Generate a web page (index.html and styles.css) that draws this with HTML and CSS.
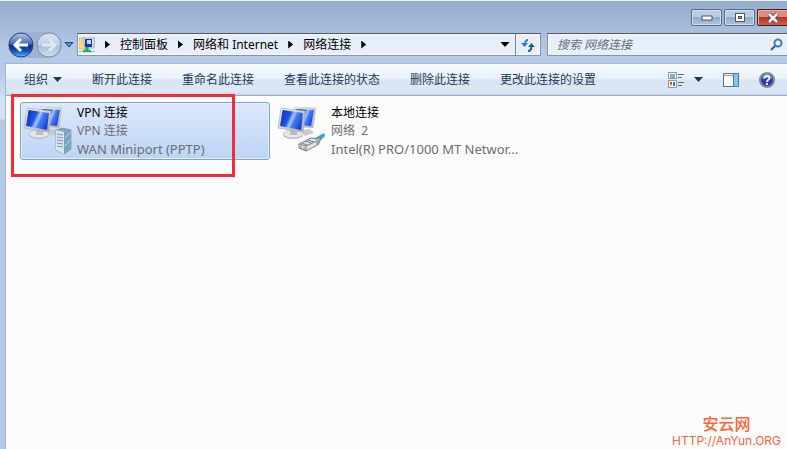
FILE: index.html
```html
<!DOCTYPE html>
<html lang="zh-CN">
<head>
<meta charset="utf-8">
<title>网络连接</title>
<link rel="stylesheet" href="styles.css">
</head>
<body>
<svg class="defs" width="0" height="0" aria-hidden="true">
  <defs>
    <linearGradient id="screen" x1="0" y1=".3" x2="1" y2=".7">
      <stop offset="0" stop-color="#0a36c4"/><stop offset=".35" stop-color="#1f55e0"/>
      <stop offset=".5" stop-color="#a9c8fb"/><stop offset=".62" stop-color="#4a7df0"/><stop offset="1" stop-color="#0b3ad8"/>
    </linearGradient>
    <linearGradient id="metal" x1="0" y1="0" x2="1" y2="1">
      <stop offset="0" stop-color="#f7f7f4"/><stop offset="1" stop-color="#a5aaad"/>
    </linearGradient>
    <linearGradient id="ball" x1="0" y1="0" x2="0" y2="1">
      <stop offset="0" stop-color="#b4c6ea"/><stop offset=".47" stop-color="#3f66b8"/>
      <stop offset=".5" stop-color="#0c2c86"/><stop offset=".75" stop-color="#1250b8"/><stop offset="1" stop-color="#48c8fa"/>
    </linearGradient>
    <linearGradient id="pale" x1="0" y1="0" x2="0" y2="1">
      <stop offset="0" stop-color="#dce6f2"/><stop offset=".48" stop-color="#c0cfe2"/>
      <stop offset=".52" stop-color="#a9bdd6"/><stop offset="1" stop-color="#d0dfef"/>
    </linearGradient>
    <g id="monitors">
      <path d="M16 2 38 3 35 23 24 22Z" fill="url(#metal)" stroke="#bcc4ca" stroke-width=".6"/>
      <path d="M18 4 36 5 33 21 22 20Z" fill="url(#screen)"/>
      <path d="M22 25l10-1 4 4-9 3z" fill="#c6cbce"/>
      <ellipse cx="15" cy="30" rx="10" ry="4" fill="#b8bdc0"/>
      <ellipse cx="15" cy="29" rx="10" ry="4" fill="#e5e7e7" stroke="#a7adb0" stroke-width=".5"/>
      <path d="M12 23l8 1-1 6h-7z" fill="#b9bec1"/>
      <path d="M3 3 27 6 25 27 0 23Z" fill="url(#metal)" stroke="#a7b0b7" stroke-width=".7"/>
      <path d="M4.500 5 25 8 23 25 2 21Z" fill="url(#screen)"/>
    </g>
  </defs>
</svg>
<div class="window">
  <header class="titlebar">
    <button class="caption" aria-label="最小化"><svg width="12" height="6"><rect x="1" y="1" width="10" height="4" fill="#fff" stroke="#4c5361"/></svg></button>
    <button class="caption" aria-label="最大化"><svg width="12" height="10"><rect x="1.500" y=".5" width="9" height="8" fill="#fff" stroke="#4c5361"/><rect x="4.500" y="3.500" width="3" height="2" fill="#8fa5c4" stroke="#4c5361"/></svg></button>
    <button class="caption close" aria-label="关闭"><svg width="14" height="12"><path d="M3 2l8 8M11 2l-8 8" stroke="#5c3a43" stroke-width="4.500"/><path d="M3 2l8 8M11 2l-8 8" stroke="#fff" stroke-width="2.500"/></svg></button>
  </header>
  <nav class="navrow">
    <div class="history">
      <button aria-label="后退"><svg width="26" height="26"><circle cx="13" cy="13" r="12" fill="url(#ball)" stroke="#2a4375"/><path d="M7 13h13M13 7l-6 6 6 6" fill="none" stroke="#fff" stroke-width="3"/></svg></button>
      <button aria-label="前进"><svg width="26" height="26"><circle cx="13" cy="13" r="12" fill="url(#pale)" stroke="#8290a8"/><path d="M6 13h13M13 7l6 6-6 6" fill="none" stroke="#dfe9f4" stroke-width="3"/></svg></button>
    </div>
    <button class="recent" aria-label="最近浏览"><svg width="10" height="6"><path d="M1 .5h8L5 5z" fill="#3aa0dc" stroke="#23406e"/></svg></button>
    <div class="address">
      <svg class="place" width="16" height="16"><path d="M0 1h6l1 2v9H0z" fill="#f5dc78" stroke="#cfb345" stroke-width=".7"/><path d="M4 1h12l-1 10H6z" fill="#d8dde2" stroke="#949ca8" stroke-width=".7"/><path d="M6 2h7v8H6z" fill="#1a36a8"/><path d="M8 3h4v4H8z" fill="#c3dbff"/><path d="M0 14.500h16" stroke="#adb8bb"/><path d="M8 10v3" stroke="#28a764" stroke-width="3"/><path d="M4 14h8" stroke="#28b36c" stroke-width="2.500"/></svg>
      <span class="next"></span><a href="#">控制面板</a>
      <span class="next"></span><a href="#">网络和 Internet</a>
      <span class="next"></span><a href="#">网络连接</a>
      <span class="next"></span>
      <button class="drop" aria-label="以前的位置"><span class="down black"></span></button>
      <button class="refresh" aria-label="刷新"><svg width="14" height="14"><path d="M4 6.500C4 3 5 2 7 2" fill="none" stroke="#2c7fc6" stroke-width="2"/><path d="M0 5h7L3.500 9z" fill="#2c7fc6"/><path d="M10.500 8c0 3.500-1 5-3.500 5" fill="none" stroke="#1e5c9f" stroke-width="2"/><path d="M7 9h7l-3.500-4z" fill="#1e5c9f"/></svg></button>
    </div>
    <label class="search"><input type="text" placeholder="搜索 网络连接" aria-label="搜索 网络连接"><svg width="13" height="13"><path d="M1 12l4.500-4.500" stroke="#31558f" stroke-width="2"/><circle cx="8" cy="5" r="3.500" fill="#e9f3fc" stroke="#3d7cc4" stroke-width="2"/></svg></label>
  </nav>
  <main class="body">
    <div class="toolbar">
      <button class="organize">组织<span class="down"></span></button>
      <button>断开此连接</button>
      <button>重命名此连接</button>
      <button>查看此连接的状态</button>
      <button>删除此连接</button>
      <button>更改此连接的设置</button>
      <div class="tools">
        <button class="view" aria-label="更改视图"><svg width="17" height="16"><rect x=".5" y=".5" width="8" height="6" fill="#fff" stroke="#8b99ae"/><path d="M2 3h5" stroke="#73b9dc" stroke-width="2"/><path d="M2 5h5" stroke="#25634c"/><rect x=".5" y="8.500" width="8" height="7" fill="#fff" stroke="#8b99ae"/><path d="M2 11h2" stroke="#dd3a24" stroke-width="2"/><path d="M5 11h2" stroke="#2566cf" stroke-width="2"/><path d="M2 13h2" stroke="#e9b51e" stroke-width="2"/><path d="M5 13h2" stroke="#289c3b" stroke-width="2"/><path d="M10 2.500h6M10 5.500h4M10 10.500h6M10 13.500h4" stroke="#55657e"/></svg><span class="down"></span></button>
        <button aria-label="预览窗格"><svg width="16" height="14"><rect x=".5" y=".5" width="15" height="13" fill="#fff" stroke="#54749a"/><path d="M1 2.500h9" stroke="#8ca4c1"/><rect x="10.500" y=".5" width="5" height="13" fill="#83c8ea" stroke="#497da2"/></svg></button>
        <button aria-label="帮助"><svg width="16" height="16"><circle cx="8" cy="8" r="7" fill="#263fab" stroke="#858b98" stroke-width="2"/><path d="M3 7a5 5 0 0 1 10 0q-5-2-10 0" fill="#6f8ddd"/><path d="M5.500 6.500c0-3.500 5-3.500 5-.5 0 2-2.500 1.500-2.500 4M8 11v2" fill="none" stroke="#fff" stroke-width="1.800"/></svg></button>
      </div>
    </div>
    <section class="items">
      <article class="item selected">
        <svg width="50" height="52"><use href="#monitors" x="1" y="1"/><path d="M33 26l6-2 9 2v19l-7 5-8-4z" fill="#83a8bf" stroke="#6a8799" stroke-width=".6"/><path d="M33 26l8 2v22l-8-4z" fill="#d8e6ed"/><path d="M41 28l7-2v19l-7 5z" fill="#7ba4bd"/><path d="M34 30l6 1M34 33l6 1M34 36l6 1M34 39l6 1M34 42l6 1" stroke="#8197a5"/><path d="M42 34l6-6M42 42l6-7" stroke="#b8d5e4"/></svg>
        <div class="text"><strong>VPN 连接</strong><span>VPN 连接</span><span class="device">WAN Miniport (PPTP)</span></div>
      </article>
      <article class="item">
        <svg width="50" height="52"><use href="#monitors" x="1" y="1"/><path d="M38 34l9-5 1 3-8 8z" fill="#39a5cf"/><path d="M22 40l12-6 7 1 1 5-13 7-7-3z" fill="#e1e5e7" stroke="#667078" stroke-width=".9"/><path d="M22 40l7 2v5M29 42l13-6M25 39l5 2M28 37l6 2M31 36l6 2M24 42v3M27 43v3" fill="none" stroke="#68747d" stroke-width=".9"/><path d="M39 35l4-2v5l-4 2" fill="#aab4ba" stroke="#68747d" stroke-width=".6"/></svg>
        <div class="text"><strong>本地连接</strong><span>网络&nbsp; 2</span><span class="device">Intel(R) PRO/1000 MT Networ...</span></div>
      </article>
    </section>
  </main>
  <div class="highlight"></div>
  <footer class="mark"><b>安云网</b><span>HTTP://AnYun.ORG</span></footer>
</div>
</body>
</html>
```
FILE: styles.css
```css
* { box-sizing: border-box; }
body {
  margin: 0;
  font: 12px/18px "Noto Sans", "Noto Sans CJK SC", sans-serif;
  color: #000;
}
button { border: 0; padding: 0; background: none; font: inherit; color: inherit; }
svg { display: block; flex: none; }
a { color: inherit; text-decoration: none; }
.defs { position: absolute; }
.window {
  position: relative;
  display: flex;
  flex-direction: column;
  min-height: 100vh;
  padding-left: 5px;
  overflow: hidden;
  border-top: 1px solid #eef3f8;
  background: linear-gradient(#94adcb 0, #b4cae7 50px, #b4cae7 70px, #d4e2f3 100px, #d4e2f3 118px, #b4cae7 119px);
}
.titlebar {
  display: flex;
  justify-content: flex-end;
  gap: 2px;
  height: 32px;
  padding-top: 8px;
}
.caption {
  display: grid;
  place-items: center;
  width: 31px;
  height: 17px;
  border: 1px solid #596a85;
  border-radius: 2px;
  box-shadow: inset 0 0 0 1px #d2dfef;
  background: linear-gradient(#bccce2 45%, #92a9ca 50%, #b0c5e0);
}
.caption.close {
  width: 30px;
  border-color: #4d2029;
  border-right: 0;
  border-radius: 2px 0 0 2px;
  box-shadow: inset 1px 1px #e9aaa2;
  background: linear-gradient(#dc8e83 45%, #ad3726 50%, #cc6148);
}
.navrow { display: flex; align-items: center; height: 23px; }
.history {
  display: flex;
  gap: 2px;
  margin-left: 3px;
  border-radius: 14px;
  background: #9db2d0;
}
.recent { margin: 0 3px 0 2px; }
.address {
  display: flex;
  align-items: center;
  flex: 0 1 464px;
  height: 23px;
  padding-left: 1px;
  border: 1px solid #8794aa;
  border-top-color: #4e5a6c;
  background: #e8eff8;
  box-shadow: inset 0 0 0 1px #f8fbfe;
  white-space: nowrap;
}
.next {
  width: 5px;
  height: 8px;
  margin: 0 10px;
  background: #000;
  clip-path: polygon(0 0, 100% 50%, 0 100%);
}
.down {
  width: 9px;
  height: 5px;
  background: #1e395b;
  clip-path: polygon(0 0, 100% 0, 50% 100%);
}
.down.black { background: #000; }
.drop { display: grid; place-items: center; width: 20px; height: 21px; margin-left: auto; }
.refresh { display: grid; place-items: center; width: 25px; height: 21px; border-left: 1px solid #7a8799; }
.search {
  display: flex;
  align-items: center;
  flex: 1;
  height: 23px;
  margin-left: 6px;
  padding: 0 4px 0 9px;
  border: 1px solid #8794aa;
  border-top-color: #4e5a6c;
  border-right: 0;
  background: #e8eff8;
  box-shadow: inset 1px 1px #f8fbfe;
}
.search input {
  flex: 1;
  min-width: 0;
  padding: 0;
  border: 0;
  outline: 0;
  background: none;
  font: inherit;
  font-style: italic;
}
.search input::placeholder { color: #68717c; opacity: 1; }
.body {
  flex: 1;
  margin-top: 7px;
  border-left: 1px solid #a1b7d4;
  background: #fcfcfc;
}
.toolbar {
  display: flex;
  align-items: center;
  gap: 30px;
  height: 33px;
  padding: 0 12px 0 18px;
  border-top: 1px solid #a5b9d5;
  border-bottom: 1px solid #9aa9c6;
  background: linear-gradient(#f9fcff, #e7f0fa 48%, #dae5f3 52%, #dde8f5 88%, #cddaec);
  color: #1e395b;
  white-space: nowrap;
}
.organize, .view { display: flex; align-items: center; gap: 5px; }
.view { gap: 9px; }
.tools { display: flex; align-items: center; gap: 20px; margin-left: auto; }
.items { display: flex; gap: 4px; padding: 6px 14px; }
.item {
  display: flex;
  gap: 4px;
  width: 250px;
  height: 58px;
  padding: 1px 2px;
  border: 1px solid transparent;
  border-radius: 3px;
  white-space: nowrap;
}
.item.selected {
  border-color: #7da2ce;
  background: linear-gradient(#dce9fa, #bdd4f6);
  box-shadow: inset 0 0 0 1px #e3eefc;
}
.text { display: flex; flex-direction: column; color: #6d6d6d; }
.text strong { font-weight: 400; color: #000; }
.text .device { font-size: 13px; }
.highlight {
  position: absolute;
  left: 11px;
  top: 93px;
  width: 224px;
  height: 83px;
  border: 3px solid #f42a38;
}
.mark {
  position: absolute;
  right: 6px;
  bottom: 0;
  display: flex;
  flex-direction: column;
  align-items: center;
  font: 12px/16px Inter, "Noto Sans CJK SC", sans-serif;
  color: #ff6337;
}
.mark b { font: 500 16px/20px "Noto Sans CJK SC", sans-serif; }
```
